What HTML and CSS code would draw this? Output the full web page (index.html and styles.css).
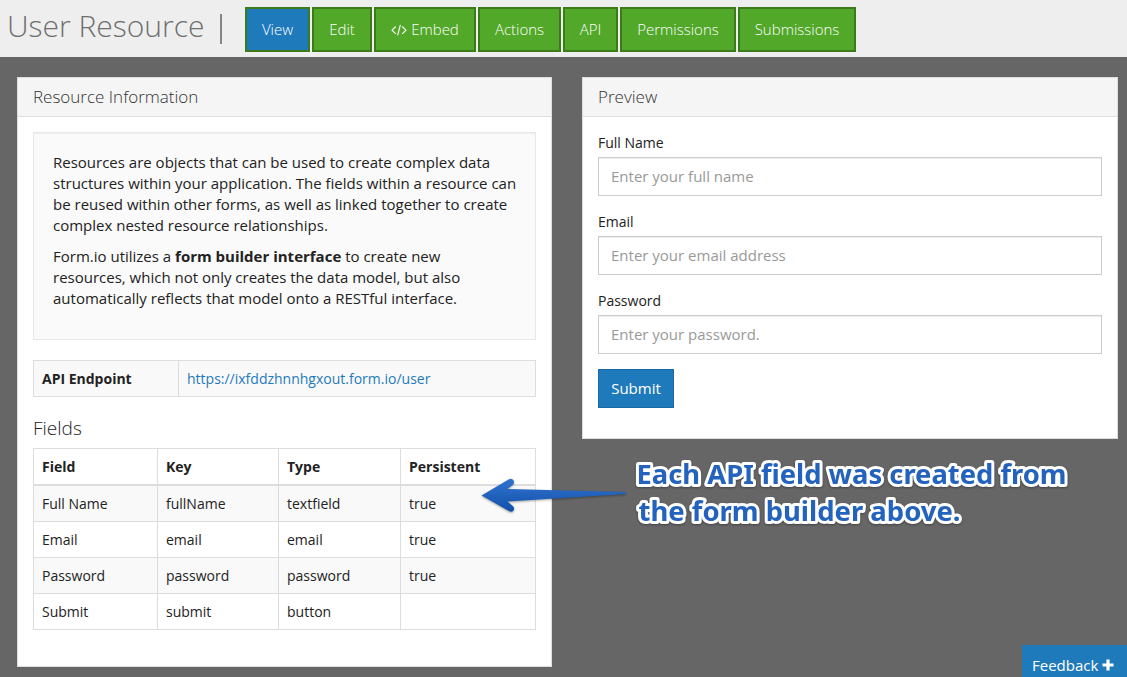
FILE: index.html
```html
<!DOCTYPE html>
<html lang="en">
<head>
<meta charset="utf-8">
<title>User Resource</title>
<link rel="stylesheet" href="styles.css">
</head>
<body>
<header class="topbar">
  <h1 class="title">User Resource <span class="divider"></span></h1>
  <nav class="tabs">
    <a class="tab active w-view">View</a>
    <a class="tab w-edit">Edit</a>
    <a class="tab w-embed"><svg class="code" viewBox="0 0 16 12" width="16" height="12"><path d="M4.8 2.500L1 6.200l3.800 3.700M11.200 2.500L15 6.200l-3.800 3.700M9.400 .8L6.600 11.400"/></svg><span>Embed</span></a>
    <a class="tab w-actions">Actions</a>
    <a class="tab w-api">API</a>
    <a class="tab w-perm">Permissions</a>
    <a class="tab w-sub">Submissions</a>
  </nav>
</header>
<main class="content">
  <section class="panel info">
    <h2 class="panel-head">Resource Information</h2>
    <div class="panel-body">
      <div class="well">
        <p>Resources are objects that can be used to create complex data<br>structures within your application. The fields within a resource can<br>be reused within other forms, as well as linked together to create<br>complex nested resource relationships.</p>
        <p>Form.io utilizes a <strong>form builder interface</strong> to create new<br>resources, which not only creates the data model, but also<br>automatically reflects that model onto a RESTful interface.</p>
      </div>
      <table class="table endpoint">
        <tr class="odd"><th>API Endpoint</th><td><a class="link">https://ixfddzhnnhgxout.form.io/user</a></td></tr>
      </table>
      <h3 class="subhead">Fields</h3>
      <table class="table fields">
        <colgroup><col class="c1"><col class="c2"><col class="c3"><col class="c4"></colgroup>
        <thead><tr><th>Field</th><th>Key</th><th>Type</th><th>Persistent</th></tr></thead>
        <tbody>
          <tr class="odd"><td>Full Name</td><td>fullName</td><td>textfield</td><td>true</td></tr>
          <tr><td>Email</td><td>email</td><td>email</td><td>true</td></tr>
          <tr class="odd"><td>Password</td><td>password</td><td>password</td><td>true</td></tr>
          <tr><td>Submit</td><td>submit</td><td>button</td><td></td></tr>
        </tbody>
      </table>
    </div>
  </section>
  <section class="panel preview">
    <h2 class="panel-head">Preview</h2>
    <form class="panel-body form">
      <label class="group">Full Name<input class="input" type="text" placeholder="Enter your full name"></label>
      <label class="group">Email<input class="input" type="text" placeholder="Enter your email address"></label>
      <label class="group">Password<input class="input" type="password" placeholder="Enter your password."></label>
      <button class="submit" type="button">Submit</button>
    </form>
  </section>
</main>
<svg class="annotation" width="647" height="97" viewBox="470 440 647 97">
  <defs>
    <linearGradient id="blue" x1="0" y1="0" x2="0" y2="1"><stop offset="0" stop-color="#2f74d0"/><stop offset="1" stop-color="#1350a8"/></linearGradient>
  </defs>
  <path class="arrow" fill="url(#blue)" d="M481.500 495.500L509 479.200Q512 477.800 513.600 480.600Q514.800 483.300 512.500 485L507.500 489L626 492V494L507.500 501.500L512.800 506Q515 508 513.500 510.500Q511.700 512.600 508.800 511Z"/>
  <text class="note" x="636.5" y="484" textLength="430" lengthAdjust="spacingAndGlyphs">Each API field was created from</text>
  <text class="note" x="638.5" y="521" textLength="322" lengthAdjust="spacingAndGlyphs">the form builder above.</text>
</svg>
<div class="feedback">Feedback<svg viewBox="0 0 12 12" width="12" height="12"><path d="M6 .5V11.500M.5 6H11.500"/></svg></div>
</body>
</html>
```
FILE: styles.css
```css
* { box-sizing: border-box; }
body { margin: 0; width: 1127px; height: 677px; overflow: hidden; position: relative; background: #666; color: #222; font: 15px/21px "Open Sans", sans-serif; }
.topbar { height: 57px; background: #eee; display: flex; align-items: flex-start; }
.title { margin: 0; width: 245px; padding: 6px 0 0 7px; font-size: 30px; line-height: 40px; font-weight: 300; color: #6f6f6f; white-space: nowrap; display: flex; }
.divider { width: 2px; height: 30px; margin: 8px 0 0 15px; background: #858585; }
.tabs { display: flex; gap: 2px; padding-top: 7px; }
.tab { height: 45px; border: 2px solid #3c7a1c; background: #52a829; color: #fff; font-size: 15px; font-weight: 300; display: flex; align-items: center; justify-content: center; gap: 4px; }
.active { background: #1f7abb; }
.w-view { width: 65px; }
.w-edit { width: 60px; }
.w-embed { width: 102px; }
.w-actions { width: 83px; }
.w-api { width: 55px; }
.w-perm { width: 116px; }
.w-sub { width: 118px; }
.code path { fill: none; stroke: #fff; stroke-width: 1.1; }
.content { display: flex; align-items: flex-start; gap: 30px; padding: 20px 0 0 17px; }
.panel { background: #fff; border: 1px solid #ddd; }
.info { width: 535px; height: 590px; }
.preview { width: 536px; height: 362px; }
.panel-head { margin: 0; height: 39px; padding: 0 15px; background: #f5f5f5; border-bottom: 1px solid #ddd; font-size: 17px; line-height: 38px; font-weight: 300; color: #333; }
.panel-body { padding: 15px; }
.well { height: 208px; padding: 19px; background: #fafafa; border: 1px solid #e8e8e8; margin-bottom: 20px; box-shadow: inset 0 1px 1px rgba(0,0,0,.05); }
.well p { margin: 0 0 10px; font-size: 15px; white-space: nowrap; }
.table { width: 503px; border-collapse: collapse; table-layout: fixed; font-size: 14px; line-height: 19px; }
.table th, .table td { border: 1px solid #ddd; padding: 8px; text-align: left; }
.table tr { height: 36px; }
.odd { background: #f9f9f9; }
.table thead th { border-bottom-width: 2px; }
.endpoint th { width: 145px; }
.link { color: #1f7abb; }
.subhead { margin: 18px 0 7px; font-size: 19px; line-height: 26px; font-weight: 300; }
.c1 { width: 124px; }
.c2 { width: 121px; }
.c3 { width: 122px; }
.c4 { width: 135px; }
.group { display: block; height: 79px; font-size: 14px; line-height: 21px; }
.input { display: block; width: 504px; height: 39px; margin-top: 4px; padding: 0 12px 2px; border: 1px solid #ccc; border-radius: 0; background: #fff; font: 15px "Open Sans", sans-serif; box-shadow: inset 0 1px 1px rgba(0,0,0,.075); }
.input::placeholder { color: #999; opacity: 1; }
.submit { display: block; width: 76px; height: 39px; padding: 0 0 2px; border: 1px solid #1a6ba5; background: #1f7abb; color: #fff; font: 500 15px "Open Sans", sans-serif; }
.annotation { position: absolute; left: 470px; top: 440px; }
.arrow { filter: drop-shadow(0 1px 1px rgba(0,0,0,.35)); }
.note { font: bold 27.5px "Noto Sans", sans-serif; fill: #2363bd; stroke: #fff; stroke-width: 6px; stroke-linejoin: round; paint-order: stroke; filter: drop-shadow(0 1px 1px rgba(0,0,0,.35)); }
.feedback { position: absolute; right: 0; bottom: 0; width: 105px; height: 32px; padding: 10px 0 0 10px; background: #1f7abb; color: #fff; font-size: 15px; font-weight: 500; line-height: 20px; display: flex; gap: 4px; }
.feedback svg { margin-top: 4px; }
.feedback path { stroke: #fff; stroke-width: 3.2; }
```
